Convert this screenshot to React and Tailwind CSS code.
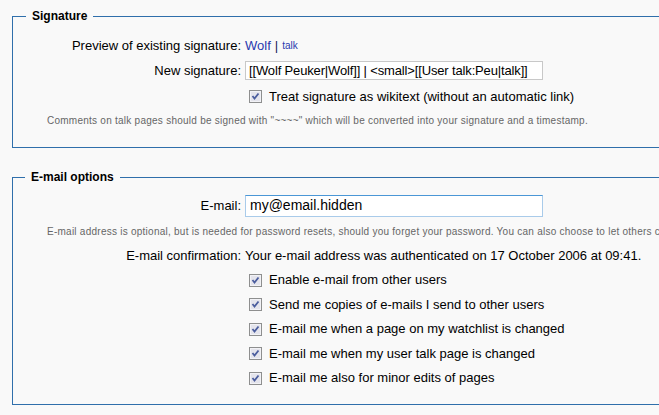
import React from "react";

const font = "font-['Liberation_Sans',Arial,sans-serif]";

function Check() {
  return (
    <svg width="13" height="13" viewBox="0 0 13 13" className="shrink-0">
      <rect x="0.5" y="0.5" width="12" height="12" fill="#e4e4ec" stroke="#8e8f8f" />
      <rect x="1.5" y="1.5" width="10" height="10" fill="none" stroke="#f2f2f6" />
      <path d="M3.5 6 L5.5 8.5 L9.5 3.5" fill="none" stroke="#4b5d9e" strokeWidth="1.8" />
    </svg>
  );
}

function Row({ label, h, children }) {
  return (
    <div className={`flex items-center ${h}`}>
      <div className="w-[228px] shrink-0 text-right">{label}</div>
      <div className="pl-[4px] flex items-center">{children}</div>
    </div>
  );
}

function CheckRow({ h, children }) {
  return (
    <Row label="" h={h}>
      <div className="flex items-center gap-[7px] pl-[4px]">
        <Check />
        <span>{children}</span>
      </div>
    </Row>
  );
}

function Help({ h, children }) {
  return (
    <div className={`flex items-center pl-[34px] ${h} text-[10px] tracking-[0.25px] text-[#666] whitespace-nowrap`}>
      {children}
    </div>
  );
}

export default function App() {
  return (
    <div className={`w-[659px] h-[415px] overflow-hidden bg-[#f9f9f9] pl-[12px] pt-[8px] text-[13px] text-black ${font}`}>
      {/* Signature */}
      <fieldset className="w-[760px] border border-[#2f6fab] pb-[16px]">
        <legend className="ml-[13px] px-[6px] text-[12px] leading-[16px] font-bold">Signature</legend>
        <div className="pt-[9px] whitespace-nowrap">
          <Row label="Preview of existing signature:" h="h-[25px]">
            <span className="text-[#2a3aae]">Wolf</span>
            <span className="mx-[4px] text-[#1a1a5a]">|</span>
            <span className="text-[10px] text-[#2a3aae]">talk</span>
          </Row>
          <Row label="New signature:" h="h-[25px]">
            <div className="w-[298px] h-[19px] border border-[#c8c8c8] bg-white pl-[3px] flex items-center overflow-hidden tracking-[-0.15px]">
              [[Wolf Peuker|Wolf]] | &lt;small&gt;[[User talk:Peu|talk]]
            </div>
          </Row>
          <CheckRow h="h-[27px]">Treat signature as wikitext (without an automatic link)</CheckRow>
          <Help h="h-[21px]">
            Comments on talk pages should be signed with "~~~~" which will be converted into your signature and a timestamp.
          </Help>
        </div>
      </fieldset>

      {/* E-mail options */}
      <fieldset className="w-[760px] mt-[21px] border border-[#2f6fab] pb-[14px]">
        <legend className="ml-[12px] px-[6px] text-[12px] leading-[16px] font-bold">E-mail options</legend>
        <div className="pt-[8px] whitespace-nowrap">
          <Row label="E-mail:" h="h-[25px]">
            <div className="w-[298px] h-[22px] border border-[#a9cbea] border-t-[#4b97d6] bg-white pl-[4px] flex items-center text-[14px]">
              my@email.hidden
            </div>
          </Row>
          <Help h="h-[26px]">
            E-mail address is optional, but is needed for password resets, should you forget your password. You can also choose to let others contact you.
          </Help>
          <Row label="E-mail confirmation:" h="h-[24px]">
            Your e-mail address was authenticated on 17 October 2006 at 09:41.
          </Row>
          <CheckRow h="h-[24px]">Enable e-mail from other users</CheckRow>
          <CheckRow h="h-[25px]">Send me copies of e-mails I send to other users</CheckRow>
          <CheckRow h="h-[24px]">E-mail me when a page on my watchlist is changed</CheckRow>
          <CheckRow h="h-[25px]">E-mail me when my user talk page is changed</CheckRow>
          <CheckRow h="h-[24px]">E-mail me also for minor edits of pages</CheckRow>
        </div>
      </fieldset>
    </div>
  );
}
